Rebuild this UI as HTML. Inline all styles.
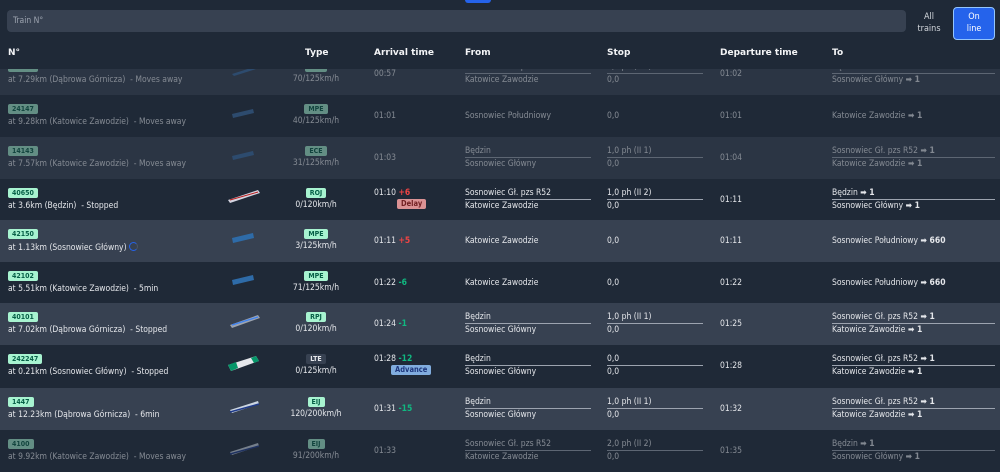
<!DOCTYPE html>
<html><head><meta charset="utf-8"><style>
*{margin:0;padding:0;box-sizing:border-box}
body{width:1000px;height:460px;overflow:hidden;background:#1f2937;font-family:"DejaVu Sans Condensed","DejaVu Sans","Liberation Sans",sans-serif;color:#e5e7eb;font-size:8.5px;position:relative}
.row{position:absolute;left:0;width:1000px;height:42px}
.row>*{position:absolute;white-space:nowrap;line-height:11px}
.L{background:#374151}.D{background:#1f2937}
.f{opacity:.5}
.num{left:8px;top:9px;background:#a7f3d0;color:#065f46;font-weight:bold;font-size:7px;padding:0 4px;border-radius:2px;line-height:10px!important}
.loc{left:8px;top:22px}
.tr{left:226px;top:6px}
.ty{left:266px;width:100px;top:9px;text-align:center}
.ty b{background:#a7f3d0;color:#065f46;font-size:7px;padding:0 4px;border-radius:2px;line-height:10px;display:inline-block}
.ty b.g{background:#374151;color:#e5e7eb}
.ty div{margin-top:1px}
.ar{left:374px;top:16px}
.ar2{left:374px;top:9px}
.red{color:#ef4444}.grn{color:#10b981}
.bd{left:397px;top:20px;font-size:7.5px;font-weight:bold;padding:0 4px;border-radius:2px;line-height:10px!important}
.del{background:#fca5a5;color:#7f1d1d;opacity:.85}
.adv{background:#93c5fd;color:#1e3a8a;opacity:.85;left:391px}
.tw{top:9px}
.tw div{border-bottom:1.5px solid #9ca3af;line-height:11px}
.tw div+div{border:none;padding-top:1px}
.s{top:16px}
.fr{left:465px}.fr.tw{width:126px}
.st{left:607px}.st.tw{width:96px}
.de{left:720px;top:16px}
.to{left:832px}.to.tw{width:163px}
.hdr{position:absolute;left:0;top:0;width:1000px;height:69px;background:#1f2937;z-index:5}
.hdr span{position:absolute;top:48px;font-weight:bold;font-size:9px;color:#f3f4f6;font-family:"DejaVu Sans",sans-serif}
</style></head><body>
<div class="hdr">
<div style="position:absolute;left:465px;top:0;width:26px;height:3px;background:#2563eb;border-radius:0 0 3px 3px"></div>
<div style="position:absolute;left:7px;top:10px;width:899px;height:22px;background:#374151;border-radius:4px;color:#9ca3af;font-size:8.5px;padding:6px 6px">Train N°</div>
<div style="position:absolute;left:910px;top:11px;width:38px;text-align:center;font-size:9px;line-height:12px;color:#d1d5db">All<br>trains</div>
<div style="position:absolute;left:953px;top:7px;width:42px;height:33px;background:#2563eb;border:1.5px solid #93c5fd;border-radius:4px;text-align:center;font-size:9px;line-height:12px;padding-top:3px;color:#fff">On<br>line</div>
<span style="left:8px">N°</span><span style="left:305px">Type</span><span style="left:374px">Arrival time</span><span style="left:465px">From</span><span style="left:607px">Stop</span><span style="left:720px">Departure time</span><span style="left:832px">To</span>
</div>

<div class="row L f" style="top:53px"><span class="num">24148</span><div class="loc">at 7.29km (Dąbrowa Górnicza)&nbsp; - Moves away</div>
<svg class="tr" width="36" height="20"><polygon points="6,15 28,8 30,10 8,17" fill="#3b6ea5"/></svg>
<div class="ty"><b>ECE</b><div>70/125km/h</div></div><div class="ar">00:57</div>
<div class="fr tw"><div>Sosnowiec Gł. pzs R52</div><div>Katowice Zawodzie</div></div>
<div class="st tw"><div>3,0 ph (II 2)</div><div>0,0</div></div><div class="de">01:02</div>
<div class="to tw"><div>Będzin <b>➡ 1</b></div><div>Sosnowiec Główny <b>➡ 1</b></div></div></div>

<div class="row D f" style="top:95px"><span class="num">24147</span><div class="loc">at 9.28km (Katowice Zawodzie)&nbsp; - Moves away</div>
<svg class="tr" width="36" height="20"><polygon points="6,13 27,8 28,12 7,17" fill="#3b6ea5"/></svg>
<div class="ty"><b>MPE</b><div>40/125km/h</div></div><div class="ar">01:01</div>
<div class="fr s">Sosnowiec Południowy</div><div class="st s">0,0</div><div class="de">01:01</div>
<div class="to s">Katowice Zawodzie <b>➡ 1</b></div></div>

<div class="row L f" style="top:137px"><span class="num">14143</span><div class="loc">at 7.57km (Katowice Zawodzie)&nbsp; - Moves away</div>
<svg class="tr" width="36" height="20"><polygon points="6,13 27,8 28,12 7,17" fill="#3b6ea5"/></svg>
<div class="ty"><b>ECE</b><div>31/125km/h</div></div><div class="ar">01:03</div>
<div class="fr tw"><div>Będzin</div><div>Sosnowiec Główny</div></div>
<div class="st tw"><div>1,0 ph (II 1)</div><div>0,0</div></div><div class="de">01:04</div>
<div class="to tw"><div>Sosnowiec Gł. pzs R52 <b>➡ 1</b></div><div>Katowice Zawodzie <b>➡ 1</b></div></div></div>

<div class="row D" style="top:179px"><span class="num">40650</span><div class="loc">at 3.6km (Będzin)&nbsp; - Stopped</div>
<svg class="tr" width="36" height="20"><polygon points="2,15 32,5 34,8 4,18" fill="#d4d4e0"/><line x1="4" y1="15" x2="32" y2="7" stroke="#b91c1c" stroke-width="1"/></svg>
<div class="ty"><b>ROJ</b><div>0/120km/h</div></div><div class="ar2">01:10 <b class="red">+6</b></div><span class="bd del">Delay</span>
<div class="fr tw"><div>Sosnowiec Gł. pzs R52</div><div>Katowice Zawodzie</div></div>
<div class="st tw"><div>1,0 ph (II 2)</div><div>0,0</div></div><div class="de">01:11</div>
<div class="to tw"><div>Będzin <b>➡ 1</b></div><div>Sosnowiec Główny <b>➡ 1</b></div></div></div>

<div class="row L" style="top:220px"><span class="num">42150</span><div class="loc">at 1.13km (Sosnowiec Główny) <span style="display:inline-block;width:9px;height:9px;border:1.5px solid #2563eb;border-right-color:#4b5563;border-radius:50%;vertical-align:-1px"></span></div>
<svg class="tr" width="36" height="20"><polygon points="6,12 27,7 28,12 7,17" fill="#2e6ba8"/></svg>
<div class="ty"><b>MPE</b><div>3/125km/h</div></div><div class="ar">01:11 <b class="red">+5</b></div>
<div class="fr s">Katowice Zawodzie</div><div class="st s">0,0</div><div class="de">01:11</div>
<div class="to s">Sosnowiec Południowy <b>➡ 660</b></div></div>

<div class="row D" style="top:262px"><span class="num">42102</span><div class="loc">at 5.51km (Katowice Zawodzie)&nbsp; - 5min</div>
<svg class="tr" width="36" height="20"><polygon points="6,12 27,7 28,12 7,17" fill="#2e6ba8"/></svg>
<div class="ty"><b>MPE</b><div>71/125km/h</div></div><div class="ar">01:22 <b class="grn">-6</b></div>
<div class="fr s">Katowice Zawodzie</div><div class="st s">0,0</div><div class="de">01:22</div>
<div class="to s">Sosnowiec Południowy <b>➡ 660</b></div></div>

<div class="row L" style="top:303px"><span class="num">40101</span><div class="loc">at 7.02km (Dąbrowa Górnicza)&nbsp; - Stopped</div>
<svg class="tr" width="36" height="20"><polygon points="4,16 32,6 34,9 6,19" fill="#9ca3af"/><line x1="6" y1="16" x2="32" y2="8" stroke="#3b82f6" stroke-width="1.2"/></svg>
<div class="ty"><b>RPJ</b><div>0/120km/h</div></div><div class="ar">01:24 <b class="grn">-1</b></div>
<div class="fr tw"><div>Będzin</div><div>Sosnowiec Główny</div></div>
<div class="st tw"><div>1,0 ph (II 1)</div><div>0,0</div></div><div class="de">01:25</div>
<div class="to tw"><div>Sosnowiec Gł. pzs R52 <b>➡ 1</b></div><div>Katowice Zawodzie <b>➡ 1</b></div></div></div>

<div class="row D" style="top:345px"><span class="num">242247</span><div class="loc">at 0.21km (Sosnowiec Główny)&nbsp; - Stopped</div>
<svg class="tr" width="36" height="22"><polygon points="2,14 30,5 33,10 5,20" fill="#e5e7eb"/><polygon points="2,14 10,11 12,17 5,20" fill="#059669"/><polygon points="25,7 30,5 33,10 28,12" fill="#059669"/></svg>
<div class="ty"><b class="g">LTE</b><div>0/125km/h</div></div><div class="ar2">01:28 <b class="grn">-12</b></div><span class="bd adv">Advance</span>
<div class="fr tw"><div>Będzin</div><div>Sosnowiec Główny</div></div>
<div class="st tw"><div>0,0</div><div>0,0</div></div><div class="de">01:28</div>
<div class="to tw"><div>Sosnowiec Gł. pzs R52 <b>➡ 1</b></div><div>Katowice Zawodzie <b>➡ 1</b></div></div></div>

<div class="row L" style="top:388px"><span class="num">1447</span><div class="loc">at 12.23km (Dąbrowa Górnicza)&nbsp; - 6min</div>
<svg class="tr" width="36" height="20"><polygon points="4,16 32,7 33,10 6,19" fill="#cbd5e1"/><line x1="4" y1="18" x2="33" y2="10" stroke="#1e3a8a" stroke-width="1.5"/></svg>
<div class="ty"><b>EIJ</b><div>120/200km/h</div></div><div class="ar">01:31 <b class="grn">-15</b></div>
<div class="fr tw"><div>Będzin</div><div>Sosnowiec Główny</div></div>
<div class="st tw"><div>1,0 ph (II 1)</div><div>0,0</div></div><div class="de">01:32</div>
<div class="to tw"><div>Sosnowiec Gł. pzs R52 <b>➡ 1</b></div><div>Katowice Zawodzie <b>➡ 1</b></div></div></div>

<div class="row D f" style="top:430px"><span class="num">4100</span><div class="loc">at 9.92km (Katowice Zawodzie)&nbsp; - Moves away</div>
<svg class="tr" width="36" height="20"><polygon points="4,16 32,7 33,10 6,19" fill="#cbd5e1"/><line x1="4" y1="18" x2="33" y2="10" stroke="#1e3a8a" stroke-width="1.5"/></svg>
<div class="ty"><b>EIJ</b><div>91/200km/h</div></div><div class="ar">01:33</div>
<div class="fr tw"><div>Sosnowiec Gł. pzs R52</div><div>Katowice Zawodzie</div></div>
<div class="st tw"><div>2,0 ph (II 2)</div><div>0,0</div></div><div class="de">01:35</div>
<div class="to tw"><div>Będzin <b>➡ 1</b></div><div>Sosnowiec Główny <b>➡ 1</b></div></div></div>
</body></html>
